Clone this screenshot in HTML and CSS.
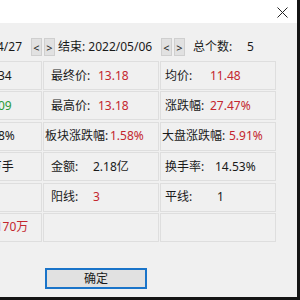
FILE: index.html
```html
<!DOCTYPE html>
<html lang="zh-CN">
<head>
<meta charset="utf-8">
<title>统计</title>
<link rel="stylesheet" href="styles.css">
</head>
<body>
<div class="desktop">
  <div class="dialog">
    <div class="titlebar">
      <span class="close" aria-label="关闭">
        <svg width="11" height="11" viewBox="0 0 11 11"><path d="M0.5 0.5 L10.5 10.5 M10.5 0.5 L0.5 10.5" stroke="#222" stroke-width="1" fill="none"/></svg>
      </span>
    </div>
    <div class="content">
      <div class="toolbar">
        <span class="date start">开始: 2022/04/27</span>
        <span class="btns"><button class="nav">&lt;</button><button class="nav">&gt;</button></span>
        <span class="date end">结束: 2022/05/06</span>
        <span class="btns"><button class="nav">&lt;</button><button class="nav">&gt;</button></span>
        <span class="count-label">总个数:</span>
        <span class="count">5</span>
      </div>
      <div class="grid">
        <div class="cell"><span class="lbl l47">开盘价:</span><span class="val">10.34</span></div>
        <div class="cell"><span class="lbl l47">最终价:</span><span class="val red">13.18</span></div>
        <div class="cell c3"><span class="lbl l45">均价:</span><span class="val red">11.48</span></div>

        <div class="cell"><span class="lbl l47">最低价:</span><span class="val green">10.09</span></div>
        <div class="cell"><span class="lbl l47">最高价:</span><span class="val red">13.18</span></div>
        <div class="cell c3"><span class="lbl l45">涨跌幅:</span><span class="val red">27.47%</span></div>

        <div class="cell"><span class="lbl l47">振幅:</span><span class="val">4.78%</span></div>
        <div class="cell wide"><span class="lbl l65">板块涨跌幅:</span><span class="val red">1.58%</span></div>
        <div class="cell c3 wide"><span class="lbl l67">大盘涨跌幅:</span><span class="val red">5.91%</span></div>

        <div class="cell"><span class="lbl l42">成交量:</span><span class="val">16万手</span></div>
        <div class="cell"><span class="lbl l42">金额:</span><span class="val">2.18亿</span></div>
        <div class="cell c3"><span class="lbl l50">换手率:</span><span class="val">14.53%</span></div>

        <div class="cell"><span class="lbl l42">阴线:</span><span class="val green">1</span></div>
        <div class="cell"><span class="lbl l42">阳线:</span><span class="val red">3</span></div>
        <div class="cell c3"><span class="lbl l52">平线:</span><span class="val">1</span></div>

        <div class="cell"><span class="lbl l48">外盘:</span><span class="val red">21170万</span></div>
        <div class="cell"></div>
        <div class="cell c3"></div>
      </div>
      <div class="actions">
        <button class="ok">确定</button>
      </div>
    </div>
  </div>
</div>
</body>
</html>
```

FILE: styles.css
```css
* { box-sizing: border-box; }

html, body {
  margin: 0;
  padding: 0;
  background: #141414;
}

.desktop {
  position: relative;
  width: 300px;
  height: 300px;
  overflow: hidden;
  background: #141414;
}

.dialog {
  position: absolute;
  left: -86px;
  top: 0;
  width: 383px;
  height: 297px;
  background: #f0f0f0;
  font-family: "Noto Sans", "Noto Sans CJK SC", sans-serif;
  font-size: 12px;
  color: #1a1a1a;
  display: flex;
  flex-direction: column;
}

.titlebar {
  height: 23px;
  background: #ffffff;
  display: flex;
  justify-content: flex-end;
  align-items: flex-start;
  padding-right: 9px;
  padding-top: 7px;
}

.close {
  display: block;
  width: 11px;
  height: 11px;
}
.close svg { display: block; }

.content {
  padding-left: 12px;
  display: flex;
  flex-direction: column;
}

.toolbar {
  display: flex;
  align-items: center;
  height: 18px;
  margin-top: 15px;
  line-height: 18px;
  white-space: nowrap;
}

.date.start {
  width: 96px;
  text-align: right;
  margin-right: 9px;
}

.date.end {
  width: 90px;
  margin-left: 3px;
  margin-right: 13px;
}

.btns {
  display: flex;
  gap: 2px;
}

.nav {
  width: 11px;
  height: 18px;
  padding: 0;
  margin: 0;
  border: 1px solid #cfcfcf;
  background: #e1e1e1;
  font-family: "Noto Sans", sans-serif;
  font-size: 11px;
  line-height: 15px;
  color: #222;
  text-align: center;
}

.count-label {
  width: 54px;
  margin-left: 8px;
}

.count {
  width: 20px;
}

.grid {
  margin-top: 5px;
  display: grid;
  grid-template-columns: 116px 116px 116px;
  grid-template-rows: repeat(6, 29px);
  column-gap: 1px;
  row-gap: 1.4px;
}

.cell {
  border: 1px solid #dedede;
  display: flex;
  align-items: center;
  padding-left: 7px;
  white-space: nowrap;
  overflow: hidden;
  line-height: 16px;
}

.cell.c3 { padding-left: 4px; }
.cell.wide { padding-left: 1px; }

.lbl { display: inline-block; flex: none; }
.l42 { width: 42px; }
.l45 { width: 45px; }
.l47 { width: 47px; }
.l48 { width: 48px; }
.l50 { width: 50px; }
.l52 { width: 52px; }
.l65 { width: 65px; }
.l67 { width: 67px; }

.val { flex: none; }
.red { color: #c4262e; }
.green { color: #2b9a3a; }

.actions {
  margin-top: 26px;
  padding-left: 119px;
}

.ok {
  width: 102px;
  height: 21px;
  margin: 0;
  padding: 0;
  border: 2px solid #1a74c9;
  background: #e1e1e1;
  font-family: "Noto Sans CJK SC", sans-serif;
  font-size: 12px;
  line-height: 16px;
  color: #1a1a1a;
}
```
